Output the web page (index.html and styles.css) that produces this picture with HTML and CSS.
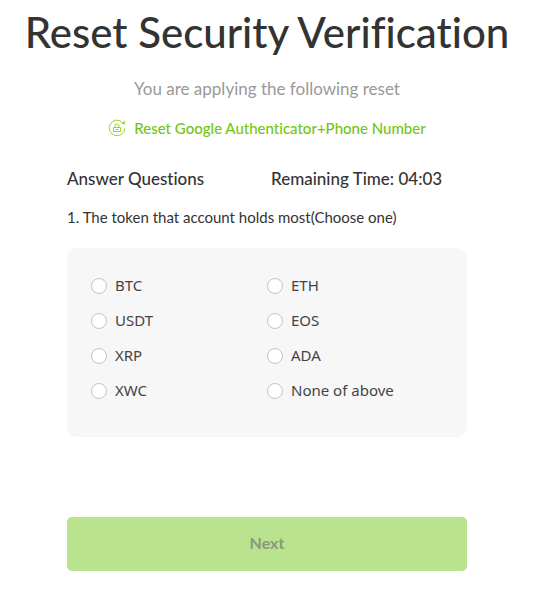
FILE: index.html
```html
<!DOCTYPE html>
<html lang="en">
<head>
<meta charset="utf-8">
<meta name="viewport" content="width=device-width, initial-scale=1">
<title>Reset Security Verification</title>
<link rel="stylesheet" href="styles.css">
</head>
<body>
<main class="page">
  <h1 class="title">Reset Security Verification</h1>
  <p class="subtitle">You are applying the following reset</p>
  <p class="reset-item">
    <svg class="reset-icon" viewBox="0 0 18 18" aria-hidden="true">
      <path d="M14.2 3.1A7.8 7.8 0 1 0 16.8 9.4"/>
      <path class="solid" d="M13 4.8L16.8 1.6V5.4Z"/>
      <path d="M5.5 8.5H12.5V12.5H5.5ZM7 8.5V7A2 2 0 0 1 11 7V8.5M7.5 10.5H10.5"/>
    </svg>
    <span>Reset Google Authenticator+Phone Number</span>
  </p>
  <form class="quiz">
    <div class="quiz-head">
      <span>Answer Questions</span>
      <span>Remaining Time: 04:03</span>
    </div>
    <fieldset class="question">
      <legend class="question-text">1. The token that account holds most(Choose one)</legend>
      <div class="options">
        <label class="option"><input type="radio" name="token">BTC</label>
        <label class="option"><input type="radio" name="token">ETH</label>
        <label class="option"><input type="radio" name="token">USDT</label>
        <label class="option"><input type="radio" name="token">EOS</label>
        <label class="option"><input type="radio" name="token">XRP</label>
        <label class="option"><input type="radio" name="token">ADA</label>
        <label class="option"><input type="radio" name="token">XWC</label>
        <label class="option"><input type="radio" name="token">None of above</label>
      </div>
    </fieldset>
    <button class="next" type="button" disabled>Next</button>
  </form>
</main>
</body>
</html>
```
FILE: styles.css
```css
* {
  box-sizing: border-box;
}

body {
  margin: 0;
  background: #fff;
  color: #333;
  font-family: Lato, "Noto Sans", sans-serif;
  font-variant-ligatures: none;
}

.page {
  display: flex;
  flex-direction: column;
  align-items: center;
  padding: 4px 1px 32px 0;
}

.title {
  margin: 0;
  font-size: 42px;
  font-weight: 500;
  line-height: 56px;
  white-space: nowrap;
}

.subtitle {
  margin: 17px 0 0;
  color: #999;
  font-size: 17px;
  line-height: 24px;
}

.reset-item {
  display: flex;
  align-items: center;
  gap: 8px;
  margin: 15px 0 0;
  color: #74c614;
  font-size: 15px;
  font-weight: 500;
  line-height: 24px;
}

.reset-icon {
  width: 18px;
  height: 18px;
  fill: none;
  stroke: #92dc20;
}

.reset-icon .solid {
  fill: #92dc20;
  stroke: none;
}

.quiz {
  width: calc(100% - 48px);
  max-width: 400px;
  margin-top: 27px;
}

.quiz-head {
  display: grid;
  grid-template-columns: 204px 1fr;
  font-size: 17px;
  font-weight: 500;
  line-height: 24px;
}

.question {
  min-width: 0;
  margin: 16px 0 0;
  padding: 0;
  border: 0;
}

.question-text {
  padding: 0;
  font-size: 15px;
  line-height: 20px;
}

.options {
  display: grid;
  grid-template-columns: 1fr 1fr;
  row-gap: 11px;
  margin-top: 21px;
  padding: 25px 24px 35px;
  border-radius: 10px;
  background: #f7f7f7;
}

.option {
  display: flex;
  align-items: center;
  gap: 8px;
  color: #444;
  font-family: "Noto Sans", sans-serif;
  font-size: 15px;
  line-height: 24px;
}

.option input {
  appearance: none;
  width: 16px;
  height: 16px;
  margin: 2px 0 0;
  border: 1px solid #c4c4c4;
  border-radius: 50%;
  background: #fff;
}

.option input:checked {
  border: 5px solid #70c000;
}

.next {
  display: block;
  width: 100%;
  height: 54px;
  margin-top: 80px;
  padding: 0 0 2px;
  border: 0;
  border-radius: 5px;
  background: #b9e38f;
  color: #8c9781;
  font: 700 16px/24px Lato, "Noto Sans", sans-serif;
}
```
